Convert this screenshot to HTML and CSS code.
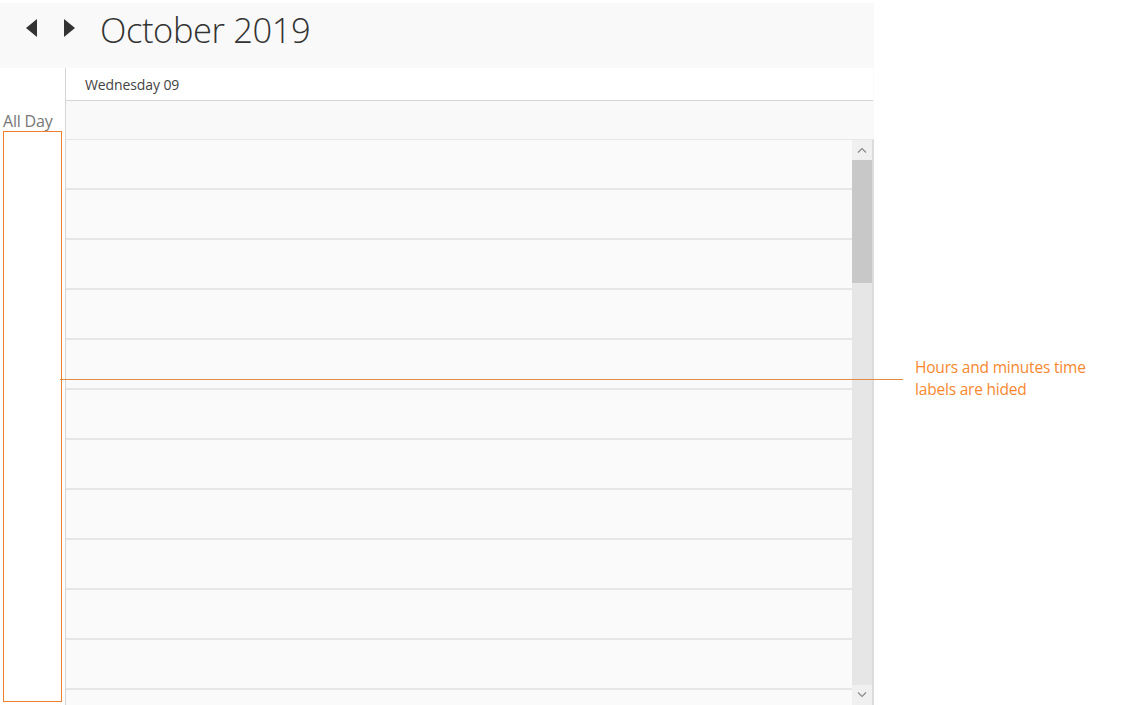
FILE: index.html
```html
<!DOCTYPE html>
<html>
<head>
<meta charset="utf-8">
<link rel="stylesheet" href="styles.css">
</head>
<body>
<div class="page">
  <div class="calendar">
    <div class="toolbar">
      <button class="nav prev" aria-label="Previous">
        <svg width="12" height="18" viewBox="0 0 12 18"><path d="M11 0 L0 9 L11 18 Z" fill="#333"/></svg>
      </button>
      <button class="nav next" aria-label="Next">
        <svg width="12" height="18" viewBox="0 0 12 18"><path d="M1 0 L12 9 L1 18 Z" fill="#333"/></svg>
      </button>
      <h1 class="title">October 2019</h1>
    </div>
    <div class="body">
      <div class="time-col">
        <div class="allday-label">All Day</div>
      </div>
      <div class="divider"></div>
      <div class="day-area">
        <div class="day-header">Wednesday 09</div>
        <div class="allday-row"></div>
        <div class="slots-wrap">
          <div class="slots">
            <div class="slot"></div><div class="slot"></div><div class="slot"></div>
            <div class="slot"></div><div class="slot"></div><div class="slot"></div>
            <div class="slot"></div><div class="slot"></div><div class="slot"></div>
            <div class="slot"></div><div class="slot"></div><div class="slot"></div>
          </div>
          <div class="scrollbar">
            <div class="sb-btn"><svg width="10" height="6" viewBox="0 0 10 6"><path d="M1 5.5 L5 1.5 L9 5.5" fill="none" stroke="#8a8a8a" stroke-width="1.2"/></svg></div>
            <div class="sb-track"><div class="sb-thumb"></div></div>
            <div class="sb-btn"><svg width="10" height="6" viewBox="0 0 10 6"><path d="M1 0.5 L5 4.5 L9 0.5" fill="none" stroke="#8a8a8a" stroke-width="1.2"/></svg></div>
          </div>
        </div>
      </div>
    </div>
  </div>
  <div class="annot-box"></div>
  <div class="annot-line"></div>
  <div class="annot-text">Hours and minutes time<br>labels are hided</div>
</div>
</body>
</html>
```
FILE: styles.css
```css
html, body {
  margin: 0;
  padding: 0;
  background: #ffffff;
}
body {
  font-family: "Open Sans", "Noto Sans", sans-serif;
  width: 1131px;
  height: 705px;
  overflow: hidden;
}
.page {
  position: relative;
  width: 1131px;
  height: 705px;
  padding-top: 3px;
  box-sizing: border-box;
}
.calendar {
  width: 874px;
  height: 702px;
  display: flex;
  flex-direction: column;
}
.toolbar {
  height: 65px;
  background: #f9f9f9;
  display: flex;
  align-items: center;
  padding-left: 26px;
  box-sizing: border-box;
}
.nav {
  border: 0;
  background: transparent;
  padding: 0;
  width: 12px;
  height: 18px;
  display: flex;
  margin-top: -15px;
}
.nav.prev { margin-right: 25px; }
.nav.next { margin-right: 25px; }
.title {
  margin: 0;
  margin-top: -12px;
  font-family: "Open Sans", sans-serif;
  font-weight: 300;
  font-size: 34.5px;
  color: #333333;
  letter-spacing: -0.4px;
}
.body {
  flex: 1;
  display: flex;
  min-height: 0;
}
.time-col {
  width: 65px;
  background: #ffffff;
}
.allday-label {
  margin-top: 43px;
  padding-left: 3px;
  font-family: "Open Sans", sans-serif;
  font-size: 16px;
  color: #777777;
  line-height: 20px;
  letter-spacing: -0.2px;
}
.divider {
  width: 1px;
  background: #d4d4d4;
}
.day-area {
  width: 808px;
  display: flex;
  flex-direction: column;
  background: #f9f9f9;
}
.day-header {
  height: 33px;
  background: #ffffff;
  border-bottom: 1px solid #d6d6d6;
  margin-right: 1px;
  box-sizing: border-box;
  padding-left: 19px;
  display: flex;
  align-items: center;
  font-family: "Open Sans", sans-serif;
  font-size: 14px;
  color: #444444;
  letter-spacing: -0.1px;
}
.allday-row {
  height: 39px;
  border-bottom: 1px solid #e8e8e8;
  box-sizing: border-box;
  background: #f9f9f9;
}
.slots-wrap {
  flex: 1;
  display: flex;
  min-height: 0;
  overflow: hidden;
}
.slots {
  flex: 1;
  background: #fafafa;
}
.slot {
  height: 50px;
  box-sizing: border-box;
  border-bottom: 2px solid #e6e6e6;
}
.scrollbar {
  width: 20px;
  display: flex;
  flex-direction: column;
  background: #e6e6e6;
  border-right: 2px solid #dcdcdc;
}
.sb-btn {
  height: 20px;
  background: #f0f0f0;
  display: flex;
  align-items: center;
  justify-content: center;
}
.sb-track {
  flex: 1;
  background: #e6e6e6;
}
.sb-thumb {
  height: 123px;
  background: #c8c8c8;
}
.annot-box {
  position: absolute;
  left: 3px;
  top: 131px;
  width: 57px;
  height: 569px;
  border: 1px solid #f08030;
}
.annot-line {
  position: absolute;
  left: 60px;
  top: 379px;
  width: 843px;
  height: 1px;
  background: #e58a40;
}
.annot-text {
  position: absolute;
  left: 915px;
  top: 356px;
  font-family: "Open Sans", sans-serif;
  font-size: 15.5px;
  line-height: 22px;
  color: #f7882f;
  letter-spacing: -0.2px;
}
```
